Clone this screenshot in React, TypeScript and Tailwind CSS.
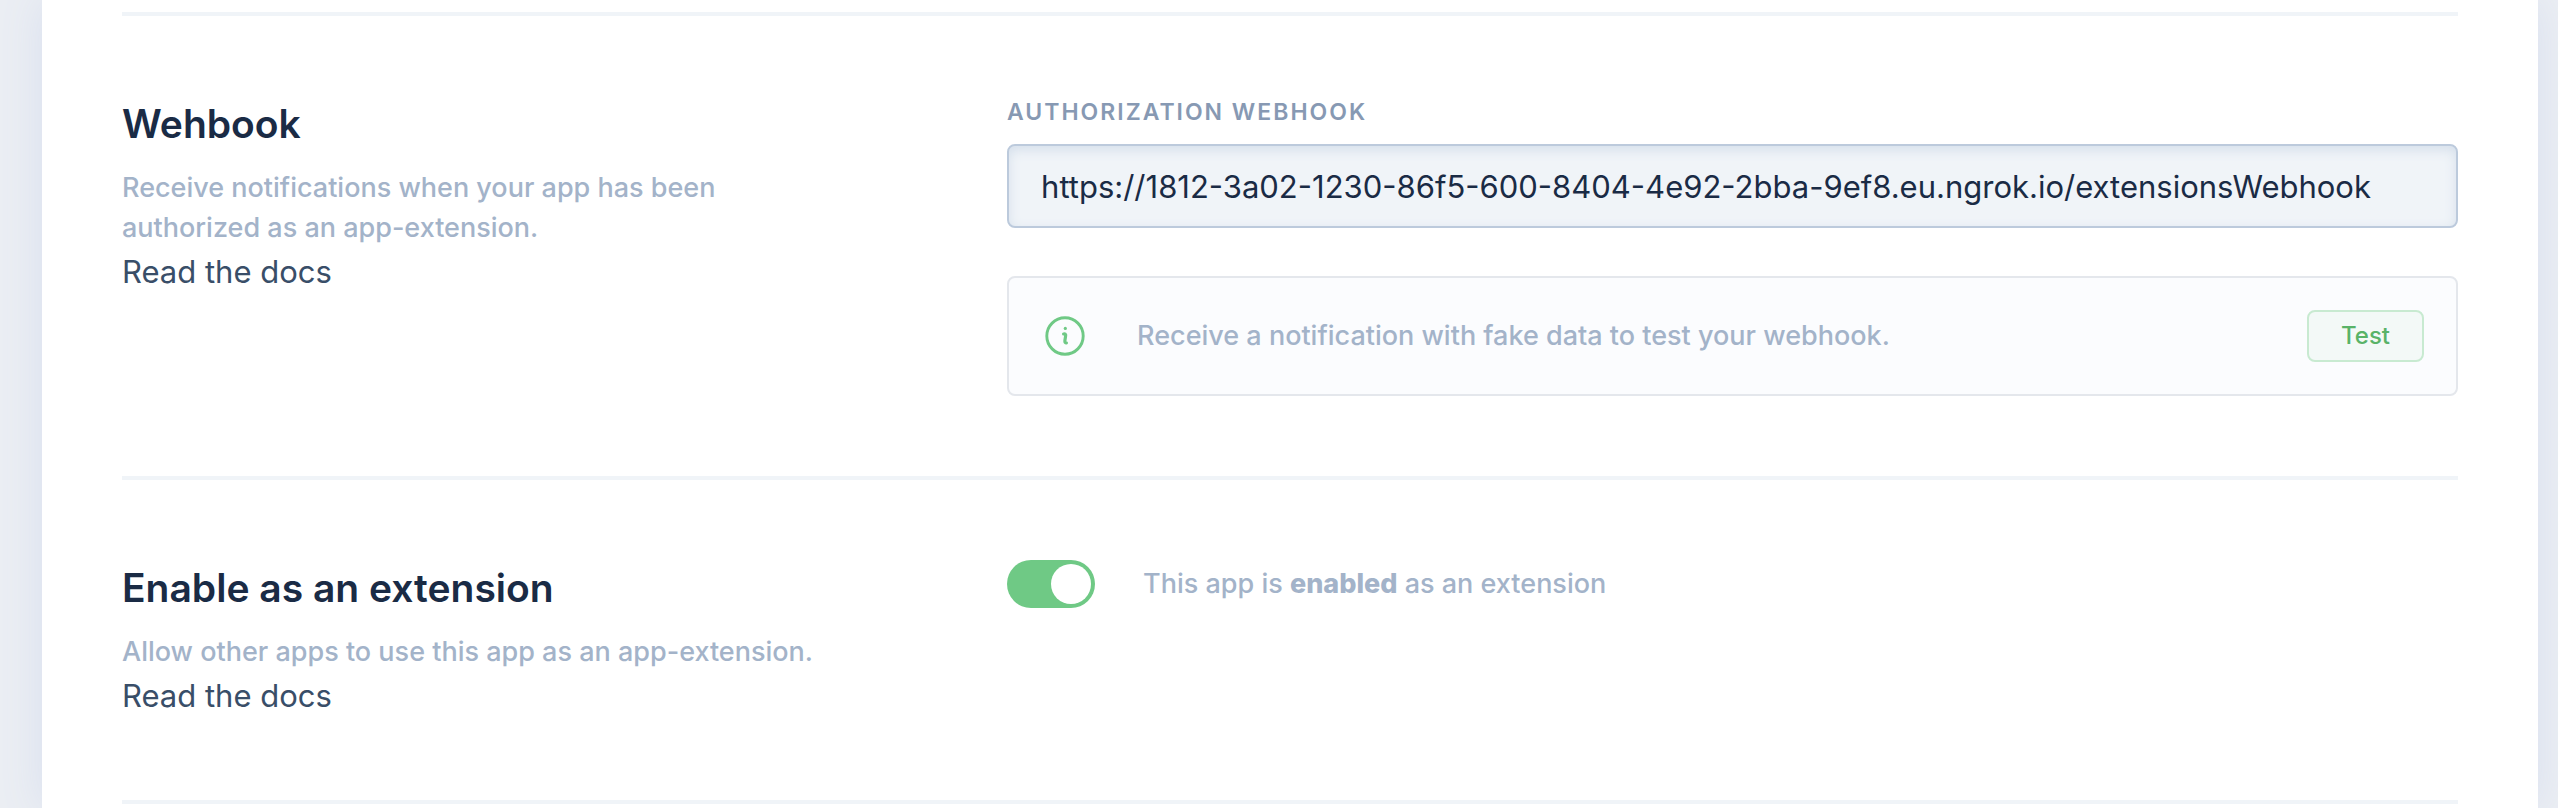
import React, { useState } from 'react';

interface SettingsSectionProps {
  title: string;
  description: string;
  children: React.ReactNode;
}

const InfoIcon: React.FC = () => (
  <svg className="h-10 w-10 shrink-0" viewBox="0 0 40 40" fill="none" stroke="#6fc985" strokeLinecap="round" aria-hidden="true">
    <circle cx="20" cy="20" r="18.2" strokeWidth="2.9" />
    <circle cx="20.3" cy="12.4" r="1.6" fill="#6fc985" stroke="none" />
    <path d="M18.6 18c2.6-.4 2.2 1.4 1.8 3.4-.5 2.6-1.2 5.8 1 5.6" strokeWidth="3.2" />
  </svg>
);

const SettingsSection: React.FC<SettingsSectionProps> = ({ title, description, children }) => (
  <section className="grid grid-cols-[5fr_9fr] gap-[79px] border-t-4 border-[#f0f4f8] pt-20 pb-20">
    <div>
      <h2 className="text-[39px] leading-[56px] font-semibold text-[#1a2b45]">{title}</h2>
      <p className="mt-4 max-w-[710px] text-[27px] leading-10 font-medium text-[#a3b3c9]">{description}</p>
      <a href="#docs" className="block text-[31px] leading-[48px] text-[#394e68]">
        Read the docs
      </a>
    </div>
    <div>{children}</div>
  </section>
);

const App: React.FC = () => {
  const [enabled, setEnabled] = useState(true);
  const [url, setUrl] = useState('https://1812-3a02-1230-86f5-600-8404-4e92-2bba-9ef8.eu.ngrok.io/extensionsWebhook');

  return (
    <div className="overflow-hidden bg-[#ebeef3] pr-5 pl-[42px] font-['Inter',sans-serif]">
      <main className="bg-white px-20 pt-3 shadow-[0_0_40px_#d8dfef]">
        <SettingsSection
          title="Wehbook"
          description="Receive notifications when your app has been authorized as an app-extension."
        >
          <label htmlFor="webhook" className="block text-[23px] leading-8 font-semibold tracking-[2px] text-[#8799b3] uppercase">
            Authorization webhook
          </label>
          <input
            id="webhook"
            type="text"
            value={url}
            onChange={(e) => setUrl(e.target.value)}
            className="mt-4 block h-[84px] w-full rounded-lg border-2 border-[#bccadc] bg-[#f0f4f8] px-8 text-[31px] text-[#1a2b45] shadow-[inset_0_4px_12px_#d5dfeb] outline-none"
          />
          <div className="mt-12 flex h-[120px] items-center rounded-lg border-2 border-[#e4e7ec] bg-[#fbfcfe] pr-8 pl-9">
            <InfoIcon />
            <p className="ml-[52px] flex-1 text-[27px] leading-10 font-medium text-[#a3b3c9]">
              Receive a notification with fake data to test your webhook.
            </p>
            <button className="h-[52px] rounded-lg border-2 border-[#c8ead1] bg-[#f3f9f7] px-8 text-[24px] font-medium text-[#59b368]">
              Test
            </button>
          </div>
        </SettingsSection>

        <SettingsSection
          title="Enable as an extension"
          description="Allow other apps to use this app as an app-extension."
        >
          <label className="flex items-center gap-12">
            <input
              type="checkbox"
              role="switch"
              checked={enabled}
              onChange={() => setEnabled(!enabled)}
              className="flex h-12 w-[88px] appearance-none items-center rounded-full bg-[#c5d0de] p-1 before:h-10 before:w-10 before:rounded-full before:bg-white checked:justify-end checked:bg-[#6fc985]"
            />
            <span className="text-[27px] leading-10 font-medium text-[#a3b3c9]">
              This app is <strong className="font-extrabold">{enabled ? 'enabled' : 'disabled'}</strong> as an extension
            </span>
          </label>
        </SettingsSection>
        <div className="h-2 border-t-4 border-[#f0f4f8]" />
      </main>
    </div>
  );
};

export default App;
